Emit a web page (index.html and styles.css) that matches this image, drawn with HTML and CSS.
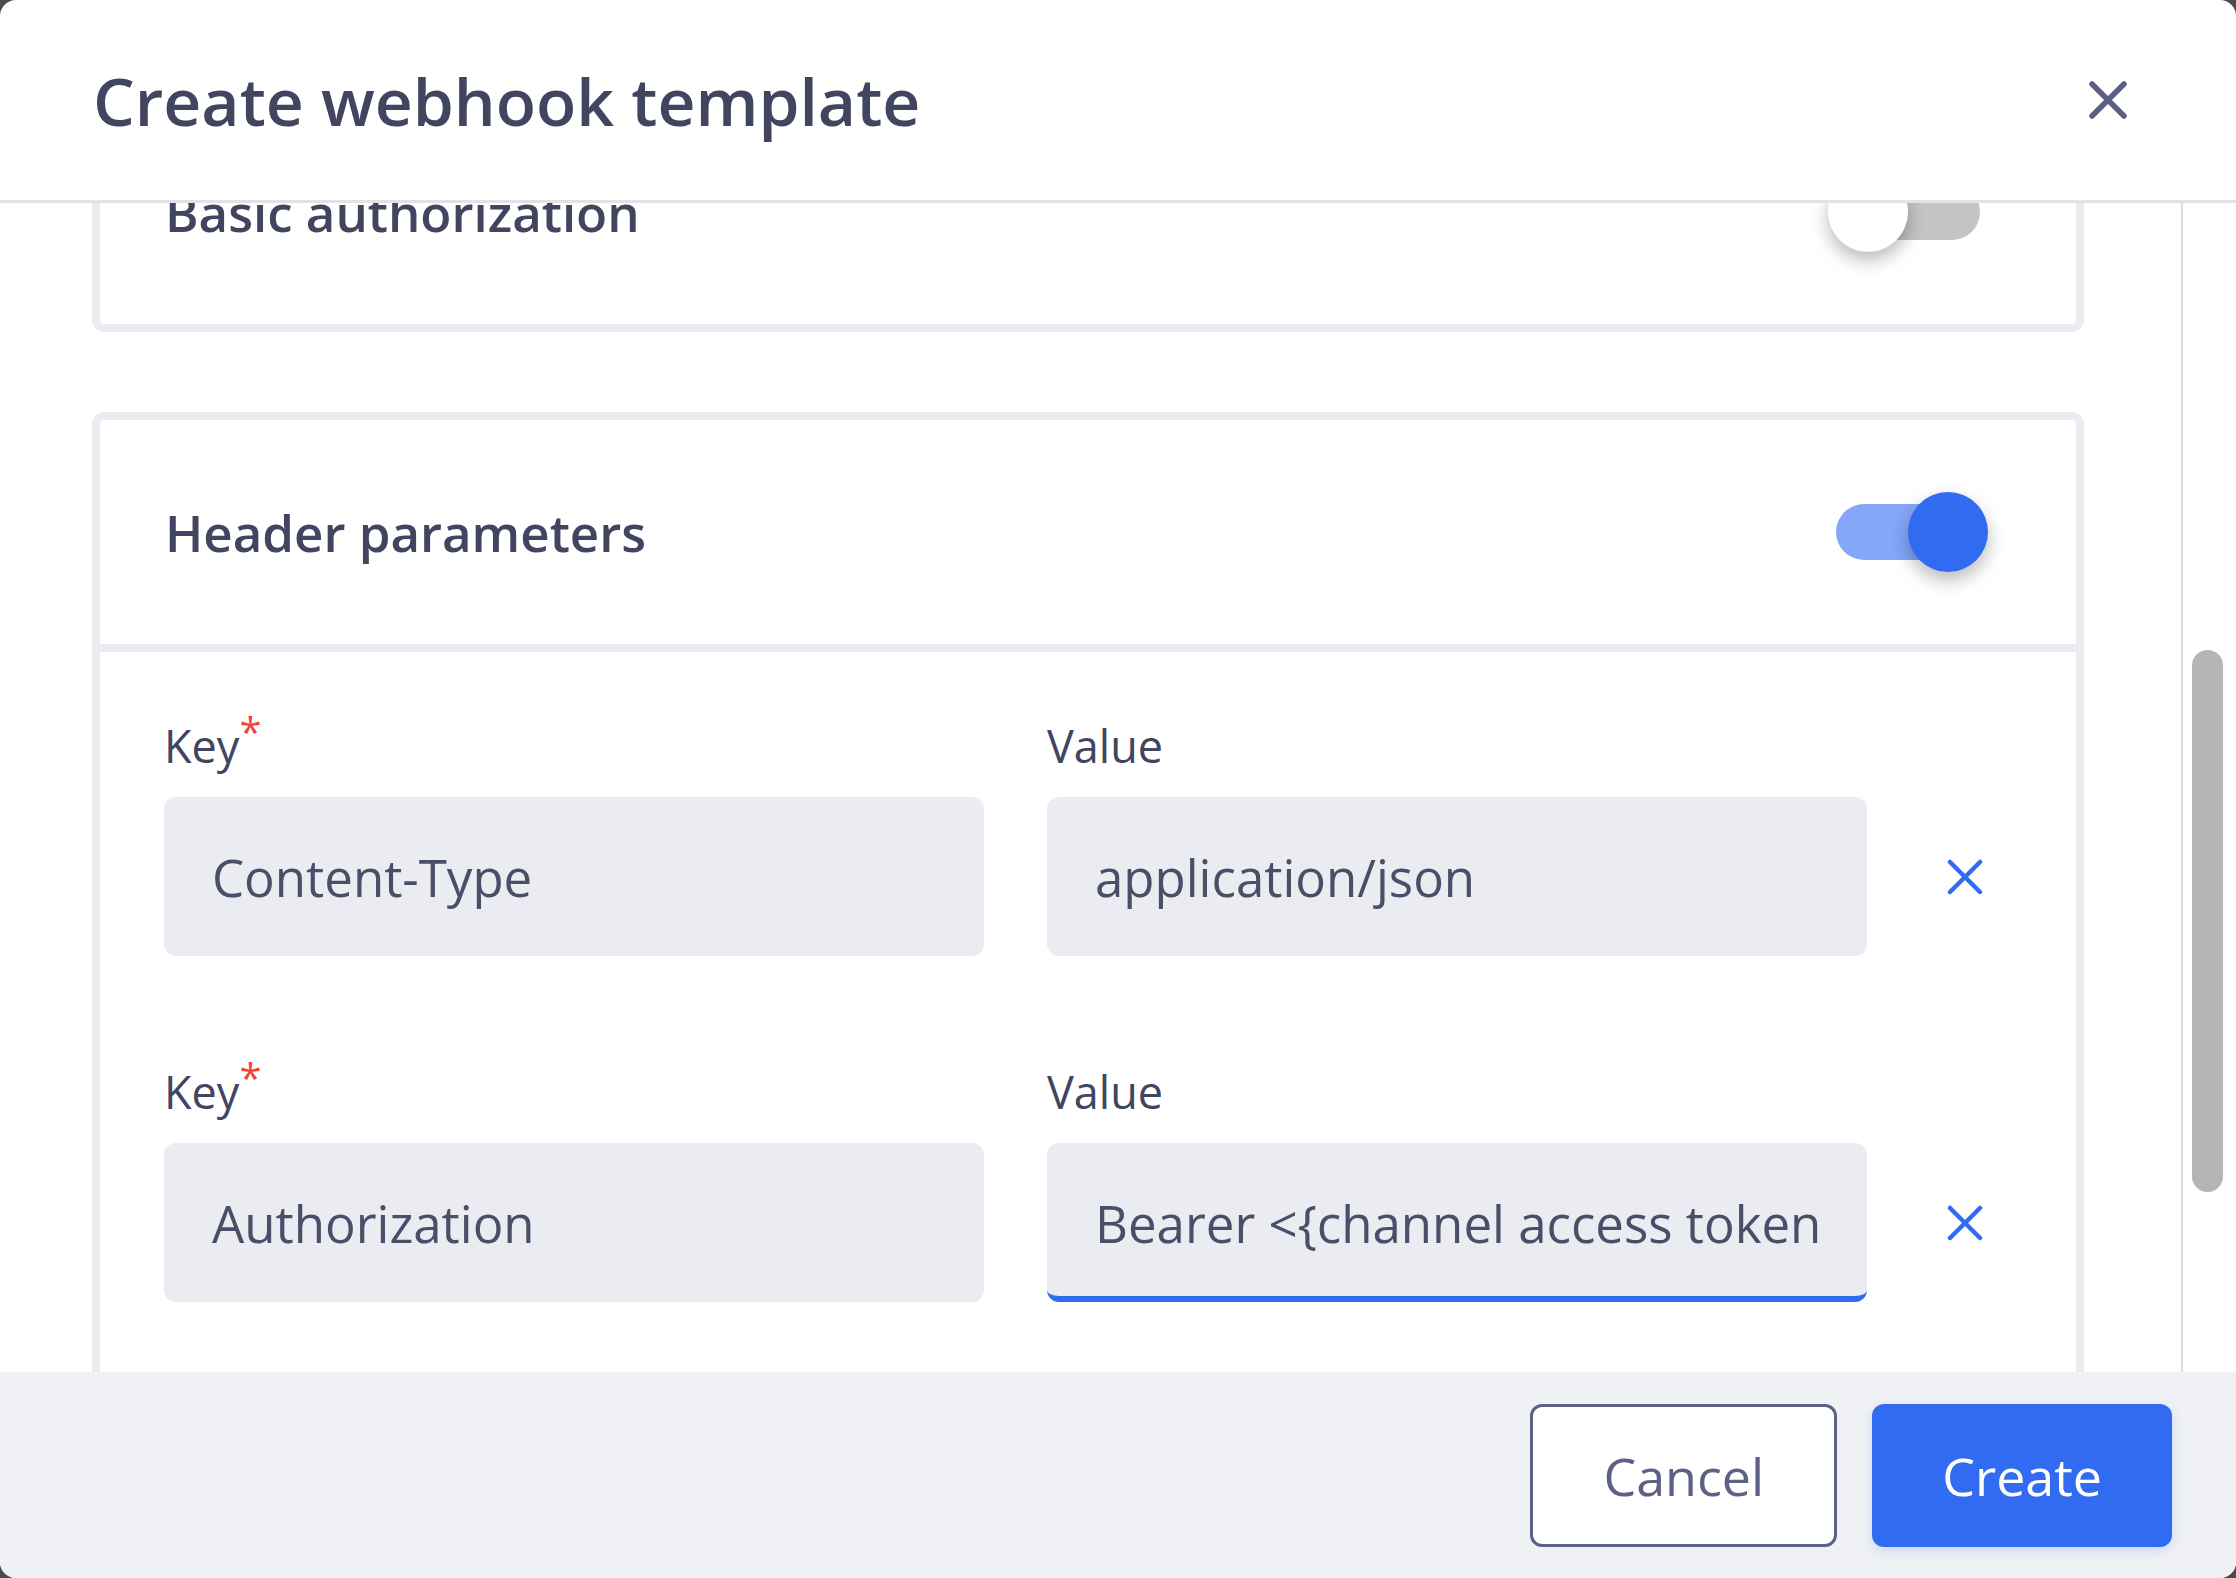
FILE: index.html
```html
<!doctype html>
<html>
<head>
    <meta charset="utf-8">
    <title>Create webhook template</title>
    <link rel="stylesheet" href="styles.css">
</head>
<body>
    <div class="modal">
        <header class="modal-header">
            <h1>Create webhook template</h1>
            <button class="close-btn" aria-label="Close">
                <svg viewBox="0 0 40 40" width="40" height="40"><path d="M4 4 L36 36 M36 4 L4 36" /></svg>
            </button>
        </header>
        <div class="modal-body">
            <div class="scroll-area">
                <div class="scroll-content">
                    <section class="card">
                        <div class="card-head">
                            <h2>Basic authorization</h2>
                            <span class="toggle"><span class="knob"></span></span>
                        </div>
                    </section>
                    <section class="card">
                        <div class="card-head divided">
                            <h2>Header parameters</h2>
                            <span class="toggle on"><span class="knob"></span></span>
                        </div>
                        <div class="card-body">
                            <div class="param-row">
                                <div class="field">
                                    <label>Key<span class="req">*</span></label>
                                    <input type="text" value="Content-Type">
                                </div>
                                <div class="field">
                                    <label>Value</label>
                                    <input type="text" value="application/json">
                                </div>
                                <button class="remove-btn" aria-label="Remove">
                                    <svg viewBox="0 0 36 36" width="36" height="36"><path d="M3 3 L33 33 M33 3 L3 33" /></svg>
                                </button>
                            </div>
                            <div class="param-row">
                                <div class="field">
                                    <label>Key<span class="req">*</span></label>
                                    <input type="text" value="Authorization">
                                </div>
                                <div class="field">
                                    <label>Value</label>
                                    <input type="text" class="focused" value="Bearer <{channel access token}>">
                                </div>
                                <button class="remove-btn" aria-label="Remove">
                                    <svg viewBox="0 0 36 36" width="36" height="36"><path d="M3 3 L33 33 M33 3 L3 33" /></svg>
                                </button>
                            </div>
                        </div>
                    </section>
                </div>
            </div>
            <div class="scroll-rail"><div class="scroll-thumb"></div></div>
        </div>
        <footer class="modal-footer">
            <button class="btn btn-cancel">Cancel</button>
            <button class="btn btn-create">Create</button>
        </footer>
    </div>
</body>
</html>
```

FILE: styles.css
```css
* {
    box-sizing: border-box;
}
body {
    margin: 0;
    background-color: #4a4a4f;
    font-family: "Open Sans", Lato, sans-serif;
    color: #41455f;
}
.modal {
    width: 2236px;
    height: 1578px;
    background-color: #fff;
    border-radius: 16px;
    overflow: hidden;
    display: flex;
    flex-direction: column;
}
.modal-header {
    height: 203px;
    flex: none;
    display: flex;
    align-items: center;
    justify-content: space-between;
    padding: 0 108px 0 93px;
    border-bottom: 3px solid #e2e2e5;
}
.modal-header h1 {
    margin: 0;
    font-size: 66px;
    font-weight: 600;
    color: #41455f;
}
.close-btn {
    border: none;
    background: none;
    padding: 0;
    width: 40px;
    height: 40px;
    cursor: pointer;
}
.close-btn svg {
    display: block;
    stroke: #5b5f86;
    stroke-width: 5.5;
    stroke-linecap: round;
}
.modal-body {
    flex: 1;
    display: flex;
    min-height: 0;
}
.scroll-area {
    flex: 1;
    overflow: hidden;
    padding: 0 97px 0 92px;
}
.scroll-content {
    margin-top: -111px;
}
.card {
    border: 8px solid #ebecf1;
    border-radius: 12px;
    margin-bottom: 80px;
}
.card-head {
    height: 224px;
    display: flex;
    align-items: center;
    justify-content: space-between;
    padding: 0 88px 0 65px;
}
.card-head.divided {
    height: 232px;
    border-bottom: 8px solid #ebecf1;
}
.card-head h2 {
    margin: 0;
    font-size: 51px;
    font-weight: 600;
    color: #41455f;
}
.toggle {
    position: relative;
    display: block;
    width: 144px;
    height: 56px;
    border-radius: 28px;
    background-color: #c4c4c4;
    margin-right: 8px;
}
.toggle .knob {
    position: absolute;
    top: -12px;
    left: -8px;
    width: 80px;
    height: 80px;
    border-radius: 50%;
    background-color: #fff;
    box-shadow: 0 8px 18px rgba(0, 0, 0, 0.28);
}
.toggle.on {
    background-color: #85a6f9;
}
.toggle.on .knob {
    left: auto;
    right: -8px;
    background-color: #306bf2;
}
.card-body {
    padding: 67px 77px 110px 64px;
    display: flex;
    flex-direction: column;
    gap: 109px;
}
.param-row {
    display: flex;
    align-items: flex-end;
    gap: 63px;
}
.field {
    flex: 0 0 820px;
    display: flex;
    flex-direction: column;
}
.field label {
    font-size: 45px;
    line-height: 53px;
    color: #41455f;
    margin-bottom: 25px;
}
.req {
    color: #f0443a;
    font-size: 40px;
    line-height: 0;
    vertical-align: 16px;
}
.field input {
    height: 159px;
    border: none;
    border-radius: 12px;
    background-color: #ebecf1;
    padding: 0 48px;
    font-family: "Open Sans", Lato, sans-serif;
    font-size: 51px;
    color: #4a4e69;
    outline: none;
}
.field input.focused {
    border-bottom: 6px solid #306bf2;
    padding-top: 6px;
}
.remove-btn {
    flex: 0 0 70px;
    height: 159px;
    border: none;
    background: none;
    padding: 0;
    display: flex;
    align-items: center;
    justify-content: center;
    cursor: pointer;
}
.remove-btn svg {
    stroke: #306bf2;
    stroke-width: 4.5;
    stroke-linecap: round;
}
.scroll-rail {
    flex: 0 0 55px;
    border-left: 2px solid #dcdcdc;
    padding: 447px 0 0 9px;
}
.scroll-thumb {
    width: 31px;
    height: 542px;
    border-radius: 16px;
    background-color: #b5b5b5;
}
.modal-footer {
    height: 206px;
    flex: none;
    background-color: #f0f1f5;
    display: flex;
    align-items: center;
    justify-content: flex-end;
    gap: 35px;
    padding-right: 64px;
}
.btn {
    height: 143px;
    padding: 0 70px;
    border-radius: 12px;
    font-family: "Open Sans", Lato, sans-serif;
    font-size: 52px;
    cursor: pointer;
}
.btn-cancel {
    background-color: #fff;
    border: 3px solid #5d6185;
    color: #5d6185;
}
.btn-create {
    background-color: #306bf2;
    border: none;
    color: #fff;
    box-shadow: 0 4px 12px rgba(48, 107, 242, 0.18);
}
```
